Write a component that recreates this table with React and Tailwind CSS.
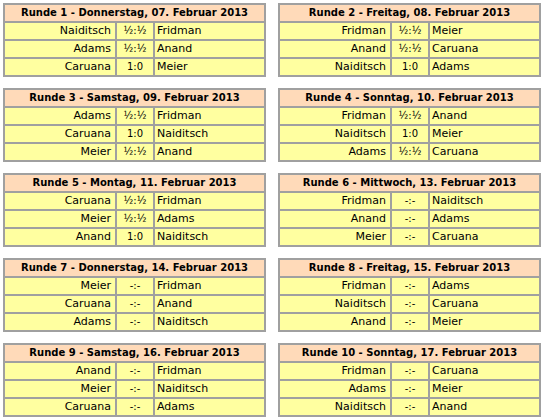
import React from "react";

const rounds = [
  { n: 1, date: "Donnerstag, 07. Februar 2013", games: [["Naiditsch", "½:½", "Fridman"], ["Adams", "½:½", "Anand"], ["Caruana", "1:0", "Meier"]] },
  { n: 2, date: "Freitag, 08. Februar 2013", games: [["Fridman", "½:½", "Meier"], ["Anand", "½:½", "Caruana"], ["Naiditsch", "1:0", "Adams"]] },
  { n: 3, date: "Samstag, 09. Februar 2013", games: [["Adams", "½:½", "Fridman"], ["Caruana", "1:0", "Naiditsch"], ["Meier", "½:½", "Anand"]] },
  { n: 4, date: "Sonntag, 10. Februar 2013", games: [["Fridman", "½:½", "Anand"], ["Naiditsch", "1:0", "Meier"], ["Adams", "½:½", "Caruana"]] },
  { n: 5, date: "Montag, 11. Februar 2013", games: [["Caruana", "½:½", "Fridman"], ["Meier", "½:½", "Adams"], ["Anand", "1:0", "Naiditsch"]] },
  { n: 6, date: "Mittwoch, 13. Februar 2013", games: [["Fridman", "-:-", "Naiditsch"], ["Anand", "-:-", "Adams"], ["Meier", "-:-", "Caruana"]] },
  { n: 7, date: "Donnerstag, 14. Februar 2013", games: [["Meier", "-:-", "Fridman"], ["Caruana", "-:-", "Anand"], ["Adams", "-:-", "Naiditsch"]] },
  { n: 8, date: "Freitag, 15. Februar 2013", games: [["Fridman", "-:-", "Adams"], ["Naiditsch", "-:-", "Caruana"], ["Anand", "-:-", "Meier"]] },
  { n: 9, date: "Samstag, 16. Februar 2013", games: [["Anand", "-:-", "Fridman"], ["Meier", "-:-", "Naiditsch"], ["Caruana", "-:-", "Adams"]] },
  { n: 10, date: "Sonntag, 17. Februar 2013", games: [["Fridman", "-:-", "Caruana"], ["Adams", "-:-", "Meier"], ["Naiditsch", "-:-", "Anand"]] },
];

function RoundTable({ round }) {
  return (
    <div className="w-[263px] border border-[#a0a0a0]">
      {/* header */}
      <div className="h-[18px] border border-[#a0a0a0] bg-[#ffdab9] text-center text-[10px] font-bold leading-[16px] text-black">
        Runde {round.n} - {round.date}
      </div>
      {round.games.map((g, i) => (
        <div key={i} className="grid grid-cols-[112px_38px_111px] bg-[#ffffa0]">
          <div className="h-[18px] border border-[#a0a0a0] pr-[4px] text-right leading-[16px]">{g[0]}</div>
          <div className="h-[18px] border border-[#a0a0a0] text-center text-[10px] leading-[16px]">{g[1]}</div>
          <div className="h-[18px] border border-[#a0a0a0] pl-[2px] text-left leading-[16px]">{g[2]}</div>
        </div>
      ))}
    </div>
  );
}

export default function App() {
  return (
    <div className="min-h-screen bg-white pl-[3px] pt-[3px] text-[11px] text-black [font-family:'DejaVu_Sans',Verdana,sans-serif]">
      <div className="grid w-[538px] grid-cols-[263px_263px] gap-x-[12px] gap-y-[11px]">
        {rounds.map((r) => (
          <RoundTable key={r.n} round={r} />
        ))}
      </div>
    </div>
  );
}
